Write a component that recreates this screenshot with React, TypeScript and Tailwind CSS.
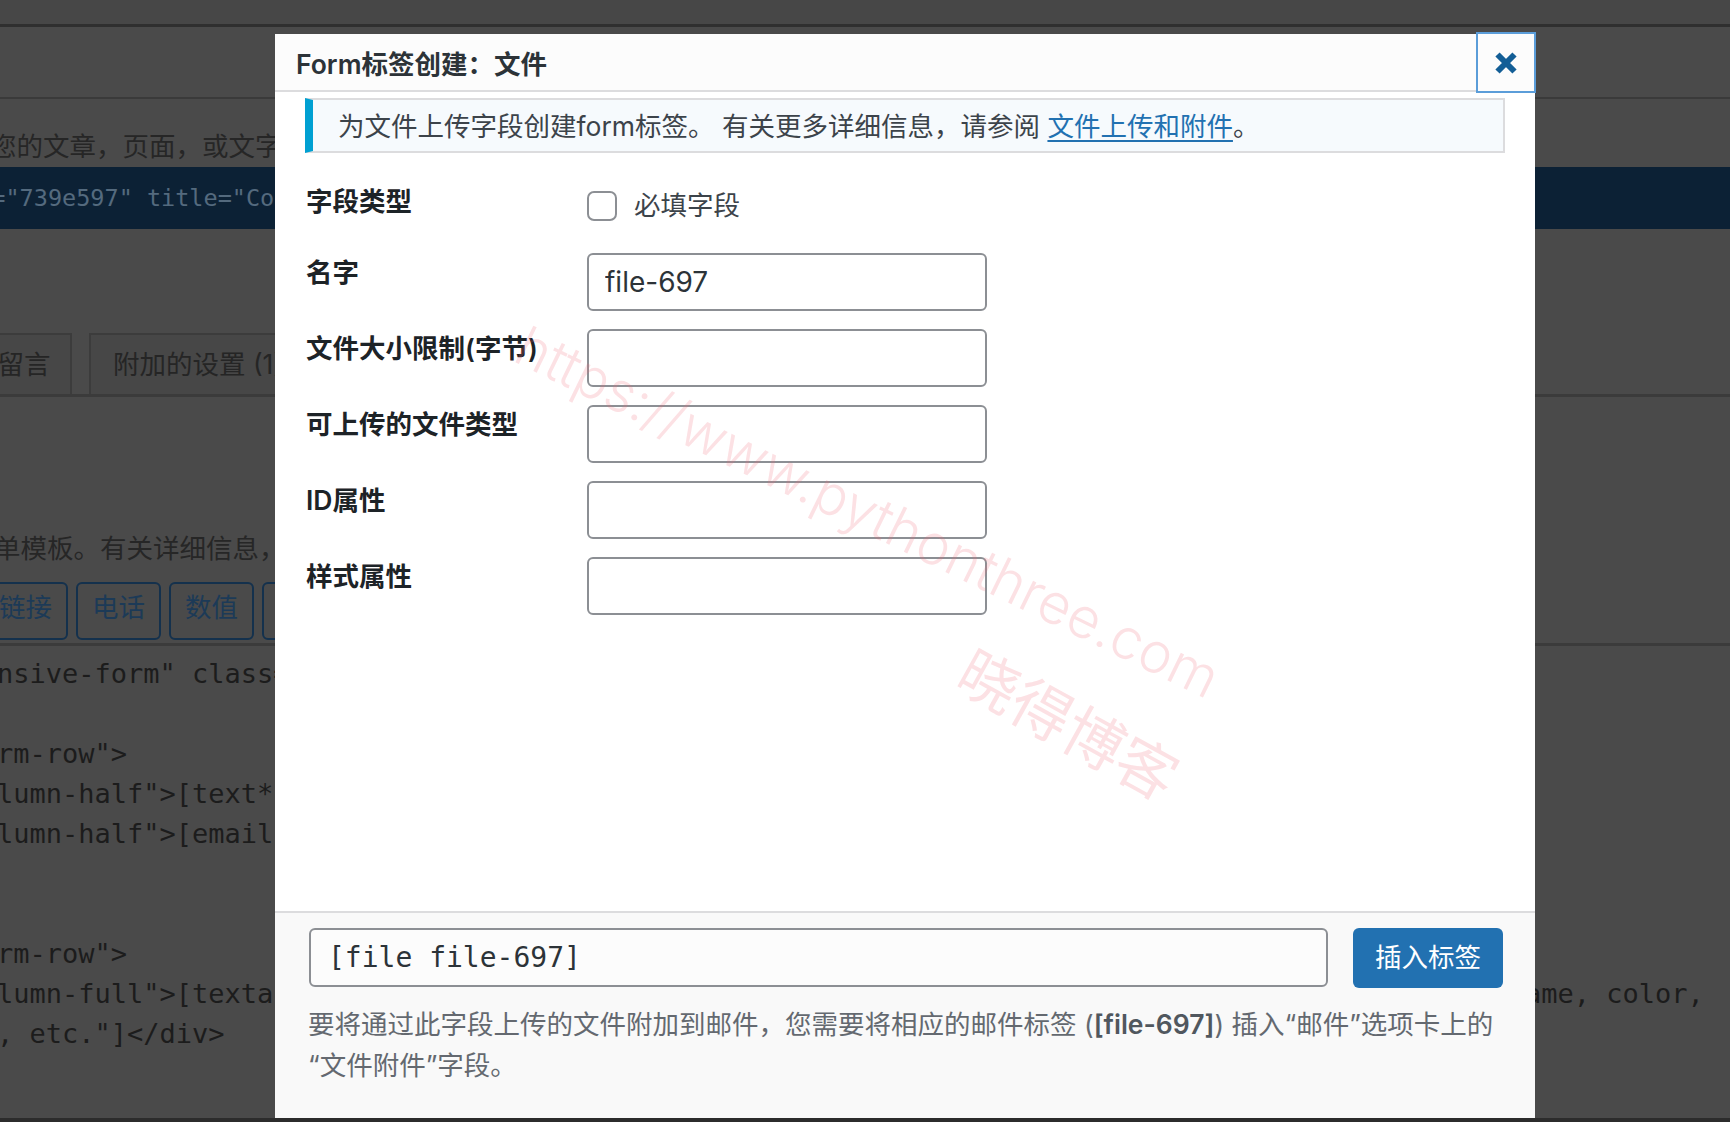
const codeLines = [
  'nsive-form" class="wpcf7-form-wrapper">',
  '',
  'rm-row">',
  'lumn-half">[text* your-name placeholder "Name"]</div>',
  'lumn-half">[email* your-email placeholder "Email"]</div>',
  '',
  '',
  'rm-row">',
  'lumn-full">[textarea your-message placeholder "Describe your order: size, shape, '.padEnd(93, ' ') + 'name, color,',
  ', etc."]</div>',
];

const fields = ['名字', '文件大小限制(字节)', '可上传的文件类型', 'ID属性', '样式属性'];
const values: Record<string, string> = { 名字: 'file-697' };

function Backdrop() {
  return (
    <div className="flex h-full flex-col text-[26.5px]">
      <div className="h-[24px] bg-[#474747]" />
      <div className="h-[3px] bg-[#2f2f2f]" />
      <div className="h-[70px]" />
      <div className="h-[2px] bg-[#3a3a3a]" />
      <div className="h-[68px] pt-[28px] leading-[38px] text-[#262626] whitespace-nowrap">
        <span className="-ml-[10px] block">您的文章，页面，或文字小工具中。</span>
      </div>
      <div className="h-[62px] bg-[#0c2135] font-['DejaVu_Sans_Mono',monospace] text-[23.5px] leading-[62px] text-[#546a7e] whitespace-pre">
        <span className="-ml-[37px] block">id="739e597" title="Contact form 1"]</span>
      </div>
      <div className="h-[104px]" />
      <div className="flex h-[61px] gap-[17px]">
        <div className="-ml-[24px] flex w-[96px] items-center justify-center border-2 border-b-0 border-[#3c3c3c] bg-[#474747] text-[#252525]">
          留言
        </div>
        <div className="flex items-center border-2 border-b-0 border-[#3c3c3c] bg-[#474747] px-[22px] text-[#252525] whitespace-nowrap">
          附加的设置 (1)
        </div>
      </div>
      <div className="h-[3px] bg-[#3b3b3b]" />
      <div className="h-[185px] pt-[132px] leading-[38px] text-[#262626] whitespace-nowrap">
        <span className="-ml-[6px] block">单模板。有关详细信息，请参阅编辑表单模板。</span>
      </div>
      <div className="flex h-[58px] gap-[8px]">
        {['链接', '电话', '数值', '日期'].map((b, i) => (
          <div
            key={b}
            className={
              'flex w-[85px] items-center justify-center rounded-[6px] border-2 border-[#14314d] pb-[6px] text-[#1c3a57] ' +
              (i === 0 ? '-ml-[17px]' : '')
            }
          >
            {b}
          </div>
        ))}
      </div>
      <div className="h-[3px]" />
      <div className="h-[3px] bg-[#3b3b3b]" />
      <div className="h-[8px]" />
      <div className="font-['DejaVu_Sans_Mono',monospace] text-[27px] leading-[40px] text-[#1c1c1c] whitespace-pre">
        {codeLines.map((l, i) => (
          <div key={i} className="-ml-[3px] h-[40px]">
            {l}
          </div>
        ))}
      </div>
      <div className="flex-1" />
      <div className="h-[4px] bg-[#2c2c2c]" />
    </div>
  );
}

function CloseIcon() {
  return (
    <svg width="24" height="24" viewBox="0 0 24 24">
      <path d="M3.5 3.5 L20.5 20.5 M20.5 3.5 L3.5 20.5" stroke="#135e96" strokeWidth="6" fill="none" />
    </svg>
  );
}

function TagDialog() {
  return (
    <div className="absolute left-[275px] top-[34px] flex h-[1084px] w-[1260px] flex-col bg-white">
      <div className="relative flex h-[58px] items-center border-b-2 border-[#dcdcde] bg-[#fcfcfc] pl-[21px] pt-[3px]">
        <h1 className="text-[26.5px] font-semibold leading-[38px] text-[#2c3338]">Form标签创建：文件</h1>
        <button className="absolute -right-px -top-[2px] flex h-[61px] w-[60px] items-center justify-center border-2 border-[#5b9dd9] bg-[#fcfcfc]">
          <CloseIcon />
        </button>
      </div>

      <div className="flex-1 px-[30px] pt-[6px]">
        <div className="flex h-[55px] items-center border-2 border-l-[8px] border-[#dcdcde] border-l-[#00a0d2] bg-[#f6fafd] pl-[25px] pt-[3px] text-[26.5px] text-[#3c434a] whitespace-nowrap">
          为文件上传字段创建form标签。 有关更多详细信息，请参阅&nbsp;
          <a className="text-[#2271b1] underline underline-offset-[4px]">文件上传和附件</a>。
        </div>

        <div className="mt-[29px] pl-px">
          <div className="flex h-[71px]">
            <div className="w-[281px] text-[26.5px] font-semibold leading-[38px] text-[#1d2327]">字段类型</div>
            <div className="mt-[5px] flex h-[38px] items-center gap-[17px]">
              <span className="h-[30px] w-[30px] rounded-[7px] border-2 border-[#8c8f94] bg-white" />
              <span className="text-[26.5px] text-[#3c434a]">必填字段</span>
            </div>
          </div>
          {fields.map((f) => (
            <div key={f} className="flex h-[76px]">
              <div className="w-[281px] text-[26.5px] font-semibold leading-[38px] text-[#1d2327] whitespace-nowrap">{f}</div>
              <input
                readOnly
                value={values[f] ?? ''}
                className="h-[58px] w-[400px] rounded-[6px] border-2 border-[#8c8f94] bg-white px-[16px] text-[28px] text-[#2c3338] outline-none"
              />
            </div>
          ))}
        </div>
      </div>

      <div className="h-[207px] border-t-2 border-[#dcdcde] bg-[#f9f9f9] pl-[34px] pr-[32px] pt-[15px]">
        <div className="flex gap-[25px]">
          <input
            readOnly
            value="[file file-697]"
            className="h-[59px] flex-1 rounded-[6px] border-2 border-[#8c8f94] bg-[#fcfcfc] pl-[17px] font-['DejaVu_Sans_Mono',monospace] text-[28px] text-[#2c3338] outline-none"
          />
          <button className="h-[60px] w-[150px] rounded-[6px] bg-[#2271b1] text-[26.5px] text-white">插入标签</button>
        </div>
        <p className="-ml-px mt-[16px] text-[26.5px] leading-[41px] text-[#646970] whitespace-nowrap">
          要将通过此字段上传的文件附加到邮件，您需要将相应的邮件标签 (<strong className="font-semibold text-[#50575e]">[file-697]</strong>) 插入“邮件”选项卡上的
          <br />
          “文件附件”字段。
        </p>
      </div>
    </div>
  );
}

function Watermark() {
  return (
    <>
      <div className="pointer-events-none absolute left-[868px] top-[512px] -translate-x-1/2 -translate-y-1/2 rotate-[26deg] text-[56px] font-light text-[#f06a7a]/20 whitespace-nowrap">
        https://www.pythonthree.com
      </div>
      <div className="pointer-events-none absolute left-[1068px] top-[725px] -translate-x-1/2 -translate-y-1/2 rotate-[29deg] text-[60px] text-[#f06a7a]/20 whitespace-nowrap">
        晓得博客
      </div>
    </>
  );
}

export default function App() {
  return (
    <div className="relative h-[1122px] w-[1730px] overflow-hidden bg-[#4a4a4a] font-['Inter','Noto_Sans_CJK_SC',sans-serif]">
      <Backdrop />
      <TagDialog />
      <Watermark />
    </div>
  );
}
